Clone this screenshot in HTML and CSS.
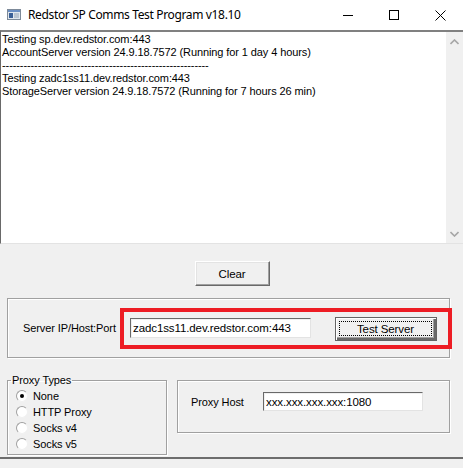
FILE: index.html
```html
<!DOCTYPE html>
<html>
<head>
<meta charset="utf-8" />
<title>Redstor SP Comms Test Program v18.10</title>
<link rel="stylesheet" href="styles.css">
</head>
<body>
<div class="window">
	<div class="titlebar">
		<svg class="app-icon" width="14" height="11" viewBox="0 0 14 11">
			<rect x="0.5" y="0.5" width="13" height="10" fill="#dfe6ee" stroke="#7d8a99"/>
			<rect x="1" y="1" width="12" height="2" fill="#6b8fc4"/>
			<rect x="2" y="4" width="4" height="5" fill="#3a5f96"/>
			<rect x="7" y="4" width="5" height="5" fill="#b9c4d1"/>
		</svg>
		<span class="title">Redstor SP Comms Test Program v18.10</span>
		<div class="controls">
			<span class="ctl"><svg width="10" height="10" viewBox="0 0 10 10"><path d="M0 5.5h10" stroke="#000" stroke-width="1"/></svg></span>
			<span class="ctl"><svg width="10" height="10" viewBox="0 0 10 10"><rect x="0.5" y="0.5" width="9" height="9" fill="none" stroke="#000"/></svg></span>
			<span class="ctl"><svg width="11" height="11" viewBox="0 0 11 11"><path d="M0.5 0.5l10 10M10.5 0.5l-10 10" stroke="#000" stroke-width="1"/></svg></span>
		</div>
	</div>

	<div class="log">
		<div class="log-text">
			<div>Testing sp.dev.redstor.com:443</div>
			<div>AccountServer version 24.9.18.7572 (Running for 1 day 4 hours)</div>
			<div>----------------------------------------------------------</div>
			<div>Testing zadc1ss11.dev.redstor.com:443</div>
			<div>StorageServer version 24.9.18.7572 (Running for 7 hours 26 min)</div>
		</div>
		<div class="scrollbar">
			<svg width="9" height="6" viewBox="0 0 9 6"><path d="M0.5 5L4.5 1L8.5 5" fill="none" stroke="#a6a6a6" stroke-width="1.6"/></svg>
			<svg width="9" height="6" viewBox="0 0 9 6"><path d="M0.5 1L4.5 5L8.5 1" fill="none" stroke="#a6a6a6" stroke-width="1.6"/></svg>
		</div>
	</div>

	<div class="clear-row">
		<button class="btn btn-clear">Clear</button>
	</div>

	<div class="group server-group">
		<span class="label">Server IP/Host:Port</span>
		<div class="highlight">
			<input class="field field-server" type="text" value="zadc1ss11.dev.redstor.com:443">
			<button class="btn btn-default"><span class="focus">Test Server</span></button>
		</div>
	</div>

	<div class="proxy-row">
		<fieldset class="group proxy-types">
			<legend>Proxy Types</legend>
			<div class="radio-item"><span class="radio checked"></span>None</div>
			<div class="radio-item"><span class="radio"></span>HTTP Proxy</div>
			<div class="radio-item"><span class="radio"></span>Socks v4</div>
			<div class="radio-item"><span class="radio"></span>Socks v5</div>
		</fieldset>
		<div class="group proxy-host">
			<span class="label host-label">Proxy Host</span>
			<input class="field field-proxy" type="text" value="xxx.xxx.xxx.xxx:1080">
		</div>
	</div>

	<div class="bottom-edge"></div>
</div>
</body>
</html>
```

FILE: styles.css
```css
*{
	box-sizing: border-box;
}

body{
	margin: 0;
	background-color: #f0f0f0;
	font-family: "Liberation Sans", Arial, sans-serif;
	font-size: 11px;
	letter-spacing: -0.1px;
	color: #000000;
}

.window{
	width: 463px;
	height: 468px;
	display: flex;
	flex-direction: column;
	overflow: hidden;
}

/* title bar */
.titlebar{
	height: 30px;
	flex: none;
	background-color: #ffffff;
	display: flex;
	align-items: center;
	padding-left: 7px;
}

.app-icon{
	flex: none;
	margin-right: 7px;
	margin-top: -1px;
}

.title{
	font-family: "Noto Sans", sans-serif;
	font-size: 12px;
	letter-spacing: -0.35px;
	flex: 1;
	margin-top: -1px;
}

.controls{
	display: flex;
	height: 30px;
}

.ctl{
	width: 46px;
	height: 30px;
	display: flex;
	align-items: center;
	justify-content: center;
}

/* log box */
.log{
	height: 214px;
	flex: none;
	display: flex;
	background-color: #ffffff;
	border-top: 2px solid #808080;
	border-left: 1px solid #696969;
	border-bottom: 1px solid #e3e3e3;
}

.log-text{
	flex: 1;
	padding: 1px 1px;
	line-height: 13px;
	white-space: nowrap;
}

.scrollbar{
	width: 17px;
	flex: none;
	background-color: #f0f0f0;
	display: flex;
	flex-direction: column;
	justify-content: space-between;
	align-items: center;
	padding: 7px 0 6px 0;
}

/* buttons */
.btn{
	font-family: "Liberation Sans", Arial, sans-serif;
	font-size: 11.5px;
	letter-spacing: -0.1px;
	color: #000000;
	background-color: #f0f0f0;
	padding: 0;
	margin: 0;
}

.clear-row{
	display: flex;
	justify-content: center;
	padding-top: 17px;
	padding-left: 1px;
	flex: none;
}

.btn-clear{
	width: 75px;
	height: 25px;
	border: 1px solid;
	border-color: #ffffff #696969 #696969 #ffffff;
	box-shadow: inset -1px -1px 0 #a0a0a0, inset 1px 1px 0 #e3e3e3;
}

.btn-default{
	width: 102px;
	height: 24px;
	margin-top: 2px;
	border: 1px solid #646464;
	box-shadow: inset 1px 1px 0 #ffffff, inset -2px -2px 0 #696969, inset -3px -3px 0 #a0a0a0;
	padding: 3px 4px 4px 3px;
}

.focus{
	display: flex;
	align-items: center;
	justify-content: center;
	height: 100%;
	border: 1px dotted #000000;
}

/* group boxes */
.group{
	border: 1px solid #a0a0a0;
	box-shadow: inset 1px 1px 0 #ffffff, 1px 1px 0 #ffffff;
}

.server-group{
	margin: 12px 0 0 7px;
	width: 443px;
	height: 60px;
	flex: none;
	display: flex;
	align-items: center;
	padding-left: 15px;
}

.highlight{
	margin-left: auto;
	margin-right: -3px;
	width: 332px;
	height: 41px;
	border: 4px solid #ed1c24;
	display: flex;
	align-items: center;
	justify-content: space-between;
	padding: 0 11px 0 6px;
}

.field{
	font-family: "Liberation Sans", Arial, sans-serif;
	font-size: 11.5px;
	letter-spacing: -0.1px;
	color: #000000;
	background-color: #ffffff;
	border: 1px solid;
	border-color: #696969 #e3e3e3 #e3e3e3 #696969;
	box-shadow: inset 1px 1px 0 #f0f0f0;
	padding: 0 2px;
	margin: 0;
	outline: none;
}

.field-server{
	width: 181px;
	height: 20px;
}

/* proxy section */
.proxy-row{
	display: flex;
	align-items: flex-start;
	margin: 16px 0 0 7px;
	flex: none;
}

.proxy-types{
	width: 160px;
	margin: 0;
	padding: 1px 0 2px 3px;
	min-inline-size: 0;
}

.proxy-types legend{
	padding: 0 1px;
	line-height: 13px;
}

.radio-item{
	height: 16px;
	display: flex;
	align-items: center;
	padding-left: 5px;
}

.radio{
	width: 12px;
	height: 12px;
	border-radius: 50%;
	background-color: #ffffff;
	border: 1px solid;
	border-color: #a0a0a0 #f0f0f0 #f0f0f0 #a0a0a0;
	margin-right: 5px;
	display: flex;
	align-items: center;
	justify-content: center;
}

.radio.checked::after{
	content: "";
	width: 4px;
	height: 4px;
	border-radius: 50%;
	background-color: #000000;
}

.proxy-host{
	margin: 6px 0 0 10px;
	width: 273px;
	height: 53px;
	display: flex;
	align-items: flex-start;
	padding: 11px 0 0 13px;
}

.host-label{
	width: 72px;
	line-height: 20px;
}

.field-proxy{
	width: 160px;
	height: 19px;
}

.bottom-edge{
	margin-top: 2px;
	height: 2px;
	flex: none;
	background-color: #6d6d6d;
}
```
